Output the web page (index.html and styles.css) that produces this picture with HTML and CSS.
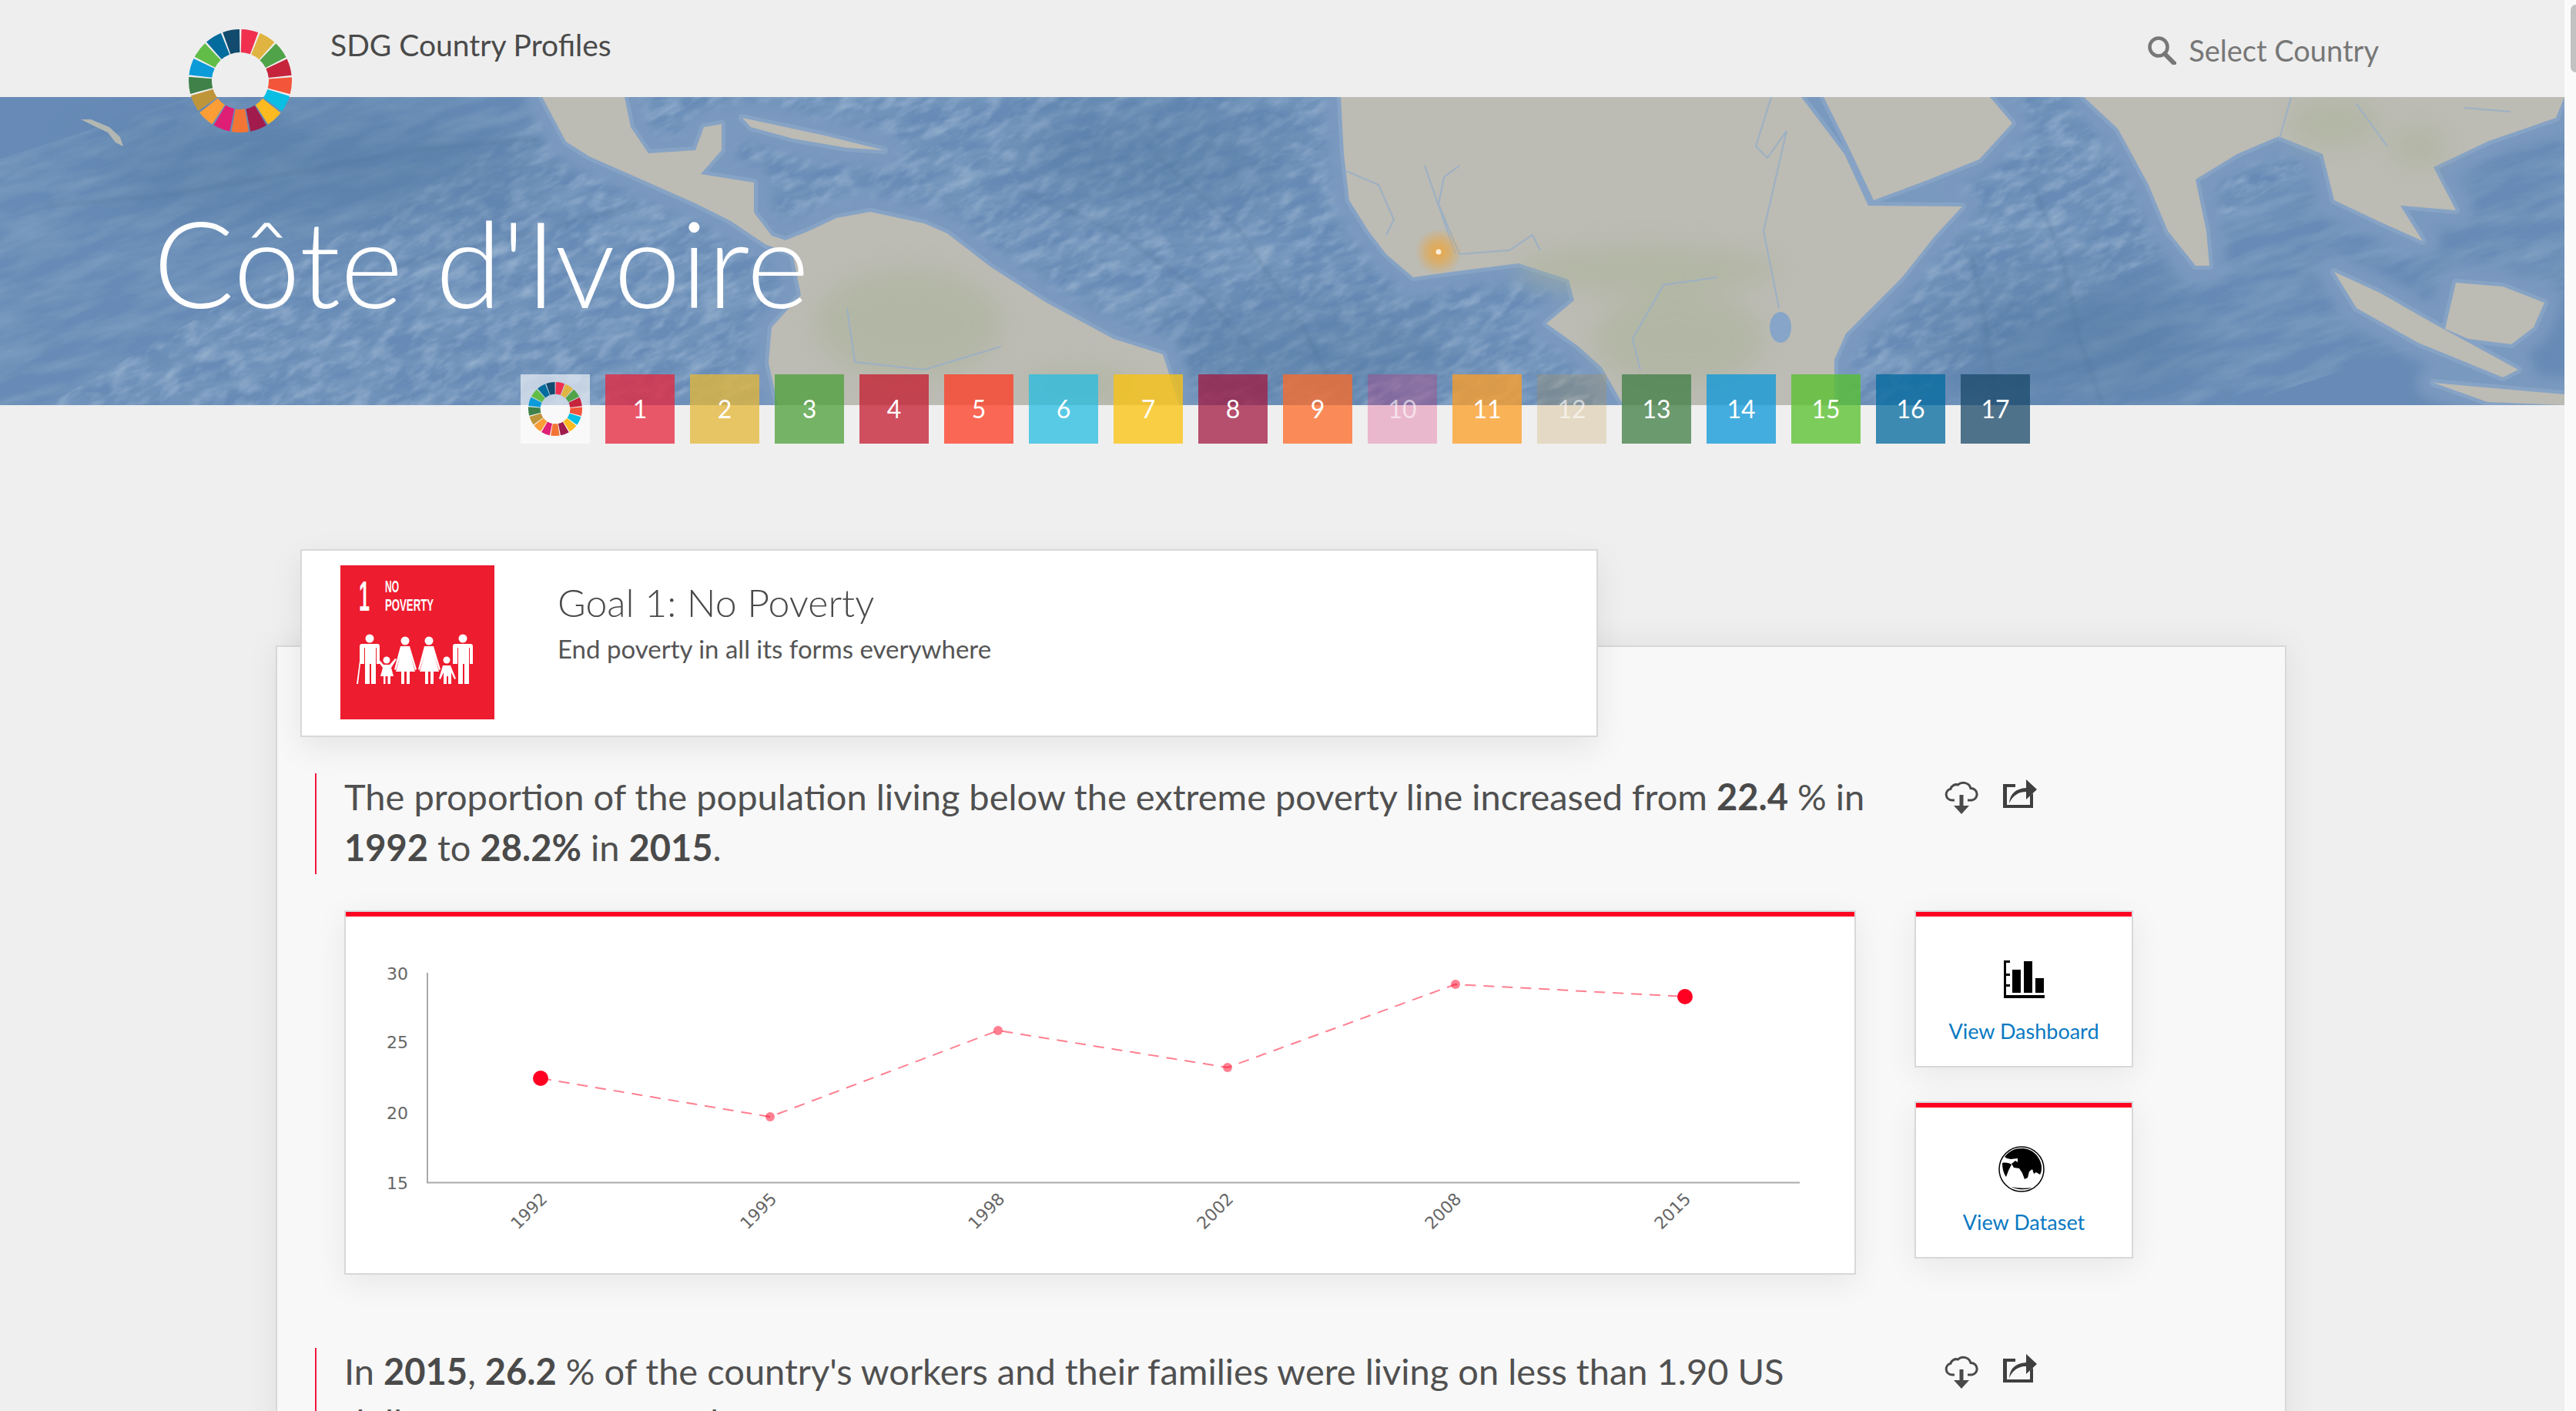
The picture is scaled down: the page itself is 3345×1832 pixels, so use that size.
FILE: index.html
```html
<!DOCTYPE html>
<html lang="en">
<head>
<meta charset="utf-8">
<title>SDG Country Profiles</title>
<link rel="stylesheet" href="styles.css">
</head>
<body>
<svg class="defs" width="0" height="0" aria-hidden="true">
  <defs>
    <symbol id="wheel" viewBox="-67 -67 134 134">
      <g fill="none" stroke-width="30">
        <circle r="52" pathLength="17" stroke-dasharray=".9 16.1" stroke="#f1304f" transform="rotate(-88.7)"/>
        <circle r="52" pathLength="17" stroke-dasharray=".9 16.1" stroke="#e0b441" transform="rotate(-67.5)"/>
        <circle r="52" pathLength="17" stroke-dasharray=".9 16.1" stroke="#50a348" transform="rotate(-46.35)"/>
        <circle r="52" pathLength="17" stroke-dasharray=".9 16.1" stroke="#c6233c" transform="rotate(-25.2)"/>
        <circle r="52" pathLength="17" stroke-dasharray=".9 16.1" stroke="#f3553a" transform="rotate(-4)"/>
        <circle r="52" pathLength="17" stroke-dasharray=".9 16.1" stroke="#09bde3" transform="rotate(17.2)"/>
        <circle r="52" pathLength="17" stroke-dasharray=".9 16.1" stroke="#fdbb21" transform="rotate(38.4)"/>
        <circle r="52" pathLength="17" stroke-dasharray=".9 16.1" stroke="#a11c4c" transform="rotate(59.5)"/>
        <circle r="52" pathLength="17" stroke-dasharray=".9 16.1" stroke="#f37536" transform="rotate(80.7)"/>
        <circle r="52" pathLength="17" stroke-dasharray=".9 16.1" stroke="#df1e75" transform="rotate(101.9)"/>
        <circle r="52" pathLength="17" stroke-dasharray=".9 16.1" stroke="#fd9d36" transform="rotate(123.1)"/>
        <circle r="52" pathLength="17" stroke-dasharray=".9 16.1" stroke="#bf953a" transform="rotate(144.3)"/>
        <circle r="52" pathLength="17" stroke-dasharray=".9 16.1" stroke="#3f8149" transform="rotate(165.4)"/>
        <circle r="52" pathLength="17" stroke-dasharray=".9 16.1" stroke="#0a9bd8" transform="rotate(186.6)"/>
        <circle r="52" pathLength="17" stroke-dasharray=".9 16.1" stroke="#62bd48" transform="rotate(207.8)"/>
        <circle r="52" pathLength="17" stroke-dasharray=".9 16.1" stroke="#026c9e" transform="rotate(229)"/>
        <circle r="52" pathLength="17" stroke-dasharray=".9 16.1" stroke="#134b6e" transform="rotate(250.1)"/>
      </g>
    </symbol>
    <symbol id="cloud" viewBox="0 0 44 44">
      <path d="M13 25H9.500a7.500 7.500 0 0 1-1.500-14.800 7.500 7.500 0 0 1 9.500-5.200 10 10 0 0 1 16.500 4.500 7.800 7.800 0 0 1 1.500 15.500H30" fill="none" stroke="#4a4a4a" stroke-width="3"/>
      <path d="M19.500 18h5v14H32L22 43 12 32h7.500z" fill="#4a4a4a"/>
    </symbol>
    <symbol id="share" viewBox="0 0 44 38">
      <path d="M0 6h16v4H5v23h30V21l4-3v19H0z" fill="#3f3f3f"/>
      <path d="M8 31c1-13 9-19 22-20V0l14 13-14 13V16c-9 0-17 4-22 15z" fill="#3f3f3f"/>
    </symbol>
  </defs>
</svg>

<div class="page">
  <header class="top">
    <svg class="logo"><use href="#wheel"/></svg>
    <div class="brand">SDG Country Profiles</div>
    <div class="select">
      <svg class="search" viewBox="0 0 38 38"><circle cx="15" cy="15" r="11.500" fill="none" stroke="#777" stroke-width="4.500"/><path d="M23 24l12 12" stroke="#777" stroke-width="6" stroke-linecap="round"/></svg>
      <span>Select Country</span>
    </div>
  </header>

  <section class="hero">
    <svg class="map" viewBox="0 126 3330 400" preserveAspectRatio="none">
      <defs>
        <filter id="ridges" x="0" y="0" width="100%" height="100%">
          <feTurbulence type="fractalNoise" baseFrequency="0.012 0.05" numOctaves="4" seed="7"/>
          <feColorMatrix type="matrix" values="0 0 0 0 .24  0 0 0 0 .38  0 0 0 0 .56  1.300 0 0 0 -.44"/>
        </filter>
        <filter id="lights" x="0" y="0" width="100%" height="100%">
          <feTurbulence type="fractalNoise" baseFrequency="0.035 0.08" numOctaves="3" seed="21"/>
          <feColorMatrix type="matrix" values="0 0 0 0 .56  0 0 0 0 .67  0 0 0 0 .80  0 .800 0 0 -.34"/>
        </filter>
        <filter id="soft"><feGaussianBlur stdDeviation="16"/></filter>
        <filter id="softer"><feGaussianBlur stdDeviation="7"/></filter>
        <filter id="faint"><feGaussianBlur stdDeviation="2.500"/></filter>
        <filter id="wide"><feGaussianBlur stdDeviation="40"/></filter>
        <radialGradient id="glow">
          <stop offset="0" stop-color="#f1a63a" stop-opacity=".9"/>
          <stop offset=".5" stop-color="#e5a748" stop-opacity=".6"/>
          <stop offset="1" stop-color="#e5a748" stop-opacity="0"/>
        </radialGradient>
        <path id="land" d="M704 126L735 184L765 203L842 237L903 264L949 287L995 318L1029 329L1040 383L1002 425L998 471L1010 526L1531 526L1510 460L1446 440L1359 393L1287 347L1230 303L1200 290L1130 275L1086 283L1050 300L1020 312L1002 306L979 276L979 237L910 226L937 195L937 161L914 165L903 195L842 199L819 165L811 126Z
        M964 153L1020 165L1071 176L1148 195L1100 192L1030 180L975 165Z
        M1741 126L1745 200L1752 260L1777 300L1800 330L1835 360L1885 353L1972 342L2037 363L2044 390L2008 420L2050 450L2080 477L2108 526L2382 526L2382 467L2397 433L2470 360L2512 307L2548 268L2426 267L2395 200L2339 126Z
        M2368 126L2400 190L2433 260L2500 235L2570 207L2613 160L2584 126Z
        M2706 126L2750 167L2790 240L2815 300L2851 345L2869 345L2865 300L2851 233L2905 200L2959 177L3016 200L3031 260L3088 287L3146 313L3117 267L3189 273L3160 217L3232 183L3319 153L3330 126Z
        M3031 353L3090 380L3160 420L3270 480L3250 490L3140 445L3060 400Z
        M3189 367L3250 372L3304 393L3290 425L3261 447L3205 440L3175 427Z
        M3160 497L3250 505L3330 512L3330 526L3230 522Z"/>
      </defs>
      <rect class="ocean" x="0" y="126" width="3330" height="400"/>
      <rect x="-200" y="-300" width="3800" height="1200" filter="url(#ridges)" transform="rotate(-18 1660 326)"/>
      <rect x="-200" y="-300" width="3800" height="1200" filter="url(#lights)" transform="rotate(-30 1660 326)"/>
      <g class="deeps" filter="url(#wide)">
        <ellipse cx="1500" cy="200" rx="180" ry="70"/>
        <ellipse cx="1700" cy="460" rx="200" ry="60"/>
        <ellipse cx="2680" cy="440" rx="180" ry="80"/>
        <ellipse cx="420" cy="220" rx="300" ry="70"/>
      </g>
      <g class="seams" filter="url(#faint)">
        <path d="M61 268L200 255L340 232L535 195L700 180"/>
        <path d="M300 400L520 345L700 300L830 265"/>
        <path d="M1500 200L1610 300L1690 420L1740 520"/>
        <path d="M1330 250L1450 300L1560 380L1640 470"/>
        <path d="M2640 240L2680 340L2700 440L2730 526"/>
        <path d="M2560 330L2580 430L2590 526"/>
      </g>
      <use href="#land" class="shelf-far" filter="url(#softer)"/>
      <use href="#land" class="shelf"/>
      <use href="#land" class="landmass"/>
      <path class="islands" d="M105 155L125 165L140 172L150 185L160 190L156 178L142 165L118 155Z"/>
      <g class="greens" filter="url(#soft)">
        <ellipse cx="1180" cy="420" rx="120" ry="70"/>
        <ellipse cx="1400" cy="500" rx="70" ry="22"/>
        <ellipse cx="2140" cy="350" rx="170" ry="30"/>
        <ellipse cx="2180" cy="440" rx="110" ry="60"/>
        <ellipse cx="3030" cy="160" rx="60" ry="30"/>
        <ellipse cx="3140" cy="190" rx="36" ry="26"/>
      </g>
      <g class="rivers">
        <path d="M1748 222L1790 240L1810 285L1800 305M1850 215L1890 330M1895 215L1875 230L1868 265L1895 330L1960 325L1990 305L2000 325"/>
        <path d="M2300 126L2280 190L2295 205L2320 170L2290 300L2310 400M2230 360L2160 370L2120 440L2130 480M1100 400L1110 470L1200 480L1300 450"/>
        <path d="M3060 135L3100 190M2960 180L2975 126M3200 140L3260 145"/>
      </g>
      <ellipse class="lake" cx="2312" cy="425" rx="14" ry="20"/>
      <circle cx="1868" cy="327" r="30" fill="url(#glow)"/>
      <circle cx="1868" cy="327" r="3.500" fill="#fbeedd"/>
    </svg>
    <h1 class="country">Côte d'Ivoire</h1>
  </section>

  <nav class="goals">
    <a class="goal g0"><svg class="goal-wheel"><use href="#wheel"/></svg></a>
    <a class="goal g1">1</a>
    <a class="goal g2">2</a>
    <a class="goal g3">3</a>
    <a class="goal g4">4</a>
    <a class="goal g5">5</a>
    <a class="goal g6">6</a>
    <a class="goal g7">7</a>
    <a class="goal g8">8</a>
    <a class="goal g9">9</a>
    <a class="goal g10">10</a>
    <a class="goal g11">11</a>
    <a class="goal g12">12</a>
    <a class="goal g13">13</a>
    <a class="goal g14">14</a>
    <a class="goal g15">15</a>
    <a class="goal g16">16</a>
    <a class="goal g17">17</a>
  </nav>

  <section class="goal-card">
    <svg class="goal-icon" viewBox="0 0 200 200">
      <rect width="200" height="200" fill="#ed1c2e"/>
      <text class="gi-text" x="24" y="59" textLength="14" lengthAdjust="spacingAndGlyphs" font-size="56">1</text>
      <text class="gi-text" x="58" y="35" textLength="18" lengthAdjust="spacingAndGlyphs" font-size="22">NO</text>
      <text class="gi-text" x="58" y="59" textLength="63" lengthAdjust="spacingAndGlyphs" font-size="22">POVERTY</text>
      <g fill="#fff">
        <circle cx="38" cy="95" r="5.500"/>
        <path d="M28 102h20q3 0 3 3v23h-4v-21h-1v47h-6v-26h-2v26h-6v-47h-1v21h-6v-23q0-3 3-3z"/>
        <path d="M21 154l4-30h1.500l-3.500 30z"/>
        <circle cx="60" cy="123" r="4.500"/>
        <path d="M47 122l2-1 7 8h8l7-8 2 1-7 11 3 11h-4v10h-3.500v-10h-3v10H56v-10h-4l3-11z"/>
        <circle cx="84" cy="98" r="5.500"/>
        <path d="M78 105h12l9 30-2 1-6-19 6 21h-7v16h-4v-16h-3v16h-4v-16h-7l6-21-6 19-2-1z"/>
        <circle cx="115" cy="98" r="5.500"/>
        <path d="M109 105h12l9 30-2 1-6-19 6 21h-7v16h-4v-16h-3v16h-4v-16h-7l6-21-6 19-2-1z"/>
        <circle cx="138" cy="123" r="4.500"/>
        <path d="M133 130h10l7 17-2 1-4-9v15h-4v-10h-2v10h-4v-15l-4 9-2-1z"/>
        <circle cx="159" cy="95" r="5.500"/>
        <path d="M149 102h20q3 0 3 3v23h-4v-21h-1v47h-6v-26h-2v26h-6v-47h-1v21h-6v-23q0-3 3-3z"/>
      </g>
    </svg>
    <div class="goal-copy">
      <h2 class="goal-title">Goal 1: No Poverty</h2>
      <p class="goal-sub">End poverty in all its forms everywhere</p>
    </div>
  </section>

  <main class="panel">
    <article class="indicator">
      <div class="ind-head">
        <div class="statement"><p class="statement-text">The proportion of the population living below the extreme poverty line increased from <b>22.4</b> % in <b>1992</b> to <b>28.2%</b> in <b>2015</b>.</p></div>
        <div class="actions">
          <svg class="act-cloud"><use href="#cloud"/></svg>
          <svg class="act-share"><use href="#share"/></svg>
        </div>
      </div>
      <div class="ind-body">
        <div class="card chart-card">
          <div class="card-bar"></div>
          <svg class="chart" viewBox="449 1188 1959 463">
            <path class="axis" d="M555 1261V1533.500H2337"/>
            <text class="tick" x="530" y="1270">30</text>
            <text class="tick" x="530" y="1359">25</text>
            <text class="tick" x="530" y="1451">20</text>
            <text class="tick" x="530" y="1542">15</text>
            <polyline class="series" points="702,1398 1000,1448 1296,1336 1594,1384 1890,1276 2188,1292"/>
            <circle class="pt-end" cx="702" cy="1398" r="10"/>
            <circle class="pt" cx="1000" cy="1448" r="6"/>
            <circle class="pt" cx="1296" cy="1336" r="6"/>
            <circle class="pt" cx="1594" cy="1384" r="6"/>
            <circle class="pt" cx="1890" cy="1276" r="6"/>
            <circle class="pt-end" cx="2188" cy="1292" r="10"/>
            <text class="year" transform="translate(712 1556) rotate(-45)">1992</text>
            <text class="year" transform="translate(1010 1556) rotate(-45)">1995</text>
            <text class="year" transform="translate(1306 1556) rotate(-45)">1998</text>
            <text class="year" transform="translate(1603 1556) rotate(-45)">2002</text>
            <text class="year" transform="translate(1899 1556) rotate(-45)">2008</text>
            <text class="year" transform="translate(2197 1556) rotate(-45)">2015</text>
          </svg>
        </div>
        <div class="side">
          <a class="card side-card">
            <div class="card-bar"></div>
            <svg class="ico-bars" viewBox="0 0 53 49">
              <path d="M0 0h8v3H3v14h5v3H3v11h5v3H3v11h50v4H0z"/>
              <path d="M11 12h11v30H11zM26 1h11v41H26zM41 23h11v19H41z"/>
            </svg>
            <span class="side-label label-dash">View Dashboard</span>
          </a>
          <a class="card side-card">
            <div class="card-bar"></div>
            <svg class="ico-globe" viewBox="0 0 60 60">
              <circle cx="30" cy="30" r="29" fill="#fff" stroke="#000" stroke-width="1.500"/>
              <path d="M8 14C14 6 22 3 30 3c14 0 24 10 26 23 0 4 0 8-2 11l-5-3-3 2-2-6-4 3-2 8-4 2-3-8-4-6-7-1-3-5 5-4 3 2 0-5-9 1-5-1z"/>
              <path d="M5 22c4-1 10 0 12 2l-4 8-3 8c-3-4-5-10-5-18z"/>
              <path d="M17 53c5 3 17 5 27 1-9 1-19 1-27-1z"/>
            </svg>
            <span class="side-label label-data">View Dataset</span>
          </a>
        </div>
      </div>
    </article>

    <article class="indicator next">
      <div class="ind-head">
        <div class="statement"><p class="statement-text">In <b>2015</b>, <b>26.2</b> % of the country's workers and their families were living on less than 1.90 US dollars per person per day.</p></div>
        <div class="actions">
          <svg class="act-cloud"><use href="#cloud"/></svg>
          <svg class="act-share"><use href="#share"/></svg>
        </div>
      </div>
    </article>
  </main>
</div>

<aside class="scrollbar"><div class="thumb"></div></aside>
</body>
</html>
```
FILE: styles.css
```css
* { box-sizing: border-box; }
html, body { margin: 0; height: 1832px; overflow: hidden; }
body {
  display: flex;
  background: #efefef;
  font-family: Lato, "Open Sans", sans-serif;
  color: #4a4a4a;
}
.defs { position: absolute; }
.page { flex: 1; min-width: 0; }
.scrollbar { width: 15px; background: #fafafa; padding: 6px 0 0 8px; }
.thumb { height: 88px; background: #c1c1c1; border-radius: 7px 0 0 7px; }

/* top bar */
.top {
  position: relative;
  height: 126px;
  display: flex;
  padding-left: 429px;
  padding-right: 241px;
  background: #eeeeee;
}
.logo { position: absolute; left: 245px; top: 38px; width: 134px; height: 134px; z-index: 3; }
.brand { font-size: 39px; font-weight: 400; line-height: 60px; margin-top: 28px; }
.select { margin-left: auto; display: flex; align-items: flex-start; gap: 16px; color: #777; font-size: 38px; line-height: 60px; padding-top: 35px; }
.search { width: 38px; height: 38px; margin-top: 11px; }

/* hero */
.hero { position: relative; height: 400px; overflow: hidden; background: #6b90bb; }
.map { position: absolute; left: 0; top: 0; width: 100%; height: 100%; }
.ocean { fill: #678bb6; }
.deeps { fill: #4f769f; opacity: .45; }
.seams { fill: none; stroke: #4c7097; stroke-width: 5; stroke-opacity: .3; }
.shelf-far { fill: #7f9dc2; stroke: #7a99bf; stroke-width: 44; stroke-linejoin: round; }
.shelf { fill: #86a3c5; stroke: #86a3c5; stroke-width: 10; stroke-linejoin: round; }
.landmass { fill: #bcbbb4; }
.islands { fill: #b3b7b2; }
.greens { fill: #a9b295; opacity: .5; }
.rivers { fill: none; stroke: #9cb0c4; stroke-width: 2; }
.lake { fill: #86a5c8; }
.country {
  position: relative;
  margin: 0;
  padding: 129px 0 0 199px;
  font-size: 156px;
  line-height: 170px;
  font-weight: 300;
  color: #fff;
}

/* goal tiles */
.goals { position: relative; display: flex; gap: 20px; margin-top: -40px; padding-left: 676px; }
.goal {
  width: 90px;
  height: 90px;
  display: flex;
  align-items: center;
  justify-content: center;
  color: #fff;
  font-size: 32px;
  line-height: 86px;
}
.goal-wheel { width: 70px; height: 70px; }
.g0 { background: rgba(255, 255, 255, .6); }
.g1 { background: rgba(229, 36, 59, .75); }
.g2 { background: rgba(229, 183, 53, .75); }
.g3 { background: rgba(76, 159, 56, .75); }
.g4 { background: rgba(197, 25, 45, .75); }
.g5 { background: rgba(255, 58, 33, .75); }
.g6 { background: rgba(38, 189, 226, .75); }
.g7 { background: rgba(252, 195, 11, .75); }
.g8 { background: rgba(162, 25, 66, .75); }
.g9 { background: rgba(253, 105, 37, .75); }
.g10 { background: rgba(221, 19, 103, .25); color: rgba(255, 255, 255, .6); }
.g11 { background: rgba(253, 157, 36, .75); }
.g12 { background: rgba(191, 139, 46, .22); color: rgba(255, 255, 255, .6); }
.g13 { background: rgba(63, 126, 68, .75); }
.g14 { background: rgba(10, 151, 217, .75); }
.g15 { background: rgba(86, 192, 43, .75); }
.g16 { background: rgba(0, 104, 157, .75); }
.g17 { background: rgba(25, 72, 106, .75); }

/* goal card */
.goal-card {
  position: relative;
  z-index: 2;
  display: flex;
  gap: 83px;
  width: 1685px;
  height: 244px;
  margin: 137px 0 0 390px;
  padding: 19px 0 0 50px;
  background: #fff;
  border: 2px solid #d8d8d8;
  box-shadow: 0 14px 40px rgba(0, 0, 0, .08);
}
.goal-icon { width: 200px; height: 200px; flex: none; }
.gi-text { font-family: "Liberation Sans", sans-serif; font-weight: 700; fill: #fff; }
.goal-copy { padding-top: 18px; margin-left: -1px; }
.goal-title { margin: 0; font-size: 50px; line-height: 60px; font-weight: 300; }
.goal-sub { margin: 8px 0 0; font-size: 33px; line-height: 44px; font-weight: 400; color: #555; }

/* main panel */
.panel {
  position: relative;
  width: 2611px;
  height: 1200px;
  margin: -119px 0 0 358px;
  padding: 164px 0 0 49px;
  background: #f8f8f8;
  border: 2px solid #d8d8d8;
  box-shadow: 0 0 40px rgba(0, 0, 0, .07);
}
.ind-head { display: flex; }
.statement {
  width: 2030px;
  min-height: 131px;
  padding-left: 36px;
  border-left: 2px solid #f0183c;
}
.statement-text {
  margin: -3px 0 0;
  font-size: 47px;
  line-height: 66px;
  font-weight: 400;
  color: #505050;
}
.statement-text b { font-weight: 700; color: #4a4a4a; }
.actions { display: flex; gap: 32px; margin: 10px 0 0 86px; }
.act-cloud { width: 44px; height: 44px; }
.act-share { width: 44px; height: 38px; margin-top: -2px; }
.ind-body { display: flex; gap: 76px; margin-top: 47px; padding-left: 38px; }
.next { margin-top: 95px; }

.card {
  display: block;
  background: #fff;
  border: 2px solid #d8d8d8;
  box-shadow: 0 10px 40px rgba(0, 0, 0, .07);
}
.card-bar { height: 6px; background: #ff0022; }
.chart-card { width: 1963px; height: 473px; }
.chart { display: block; width: 1959px; height: 463px; }
.axis { fill: none; stroke: #aaa; stroke-width: 2; }
.tick { font: 22px "DejaVu Sans", sans-serif; fill: #666; text-anchor: end; }
.year { font: 22px "DejaVu Sans", sans-serif; fill: #666; text-anchor: end; }
.series { fill: none; stroke: #ff0022; stroke-opacity: .5; stroke-width: 2; stroke-dasharray: 14 10; }
.pt { fill: #ff0022; fill-opacity: .5; }
.pt-end { fill: #ff0022; }

.side { display: flex; flex-direction: column; gap: 44px; }
.side-card {
  width: 284px;
  height: 204px;
  display: flex;
  flex-direction: column;
  align-items: center;
}
.side-card .card-bar { align-self: stretch; flex: none; }
.ico-bars { width: 53px; height: 49px; margin-top: 57px; }
.ico-globe { width: 60px; height: 60px; margin: 50px 6px 0 0; }
.side-label { font-size: 27px; line-height: 40px; color: #0a79c2; }
.label-dash { margin-top: 23px; }
.label-data { margin-top: 19px; }
```
